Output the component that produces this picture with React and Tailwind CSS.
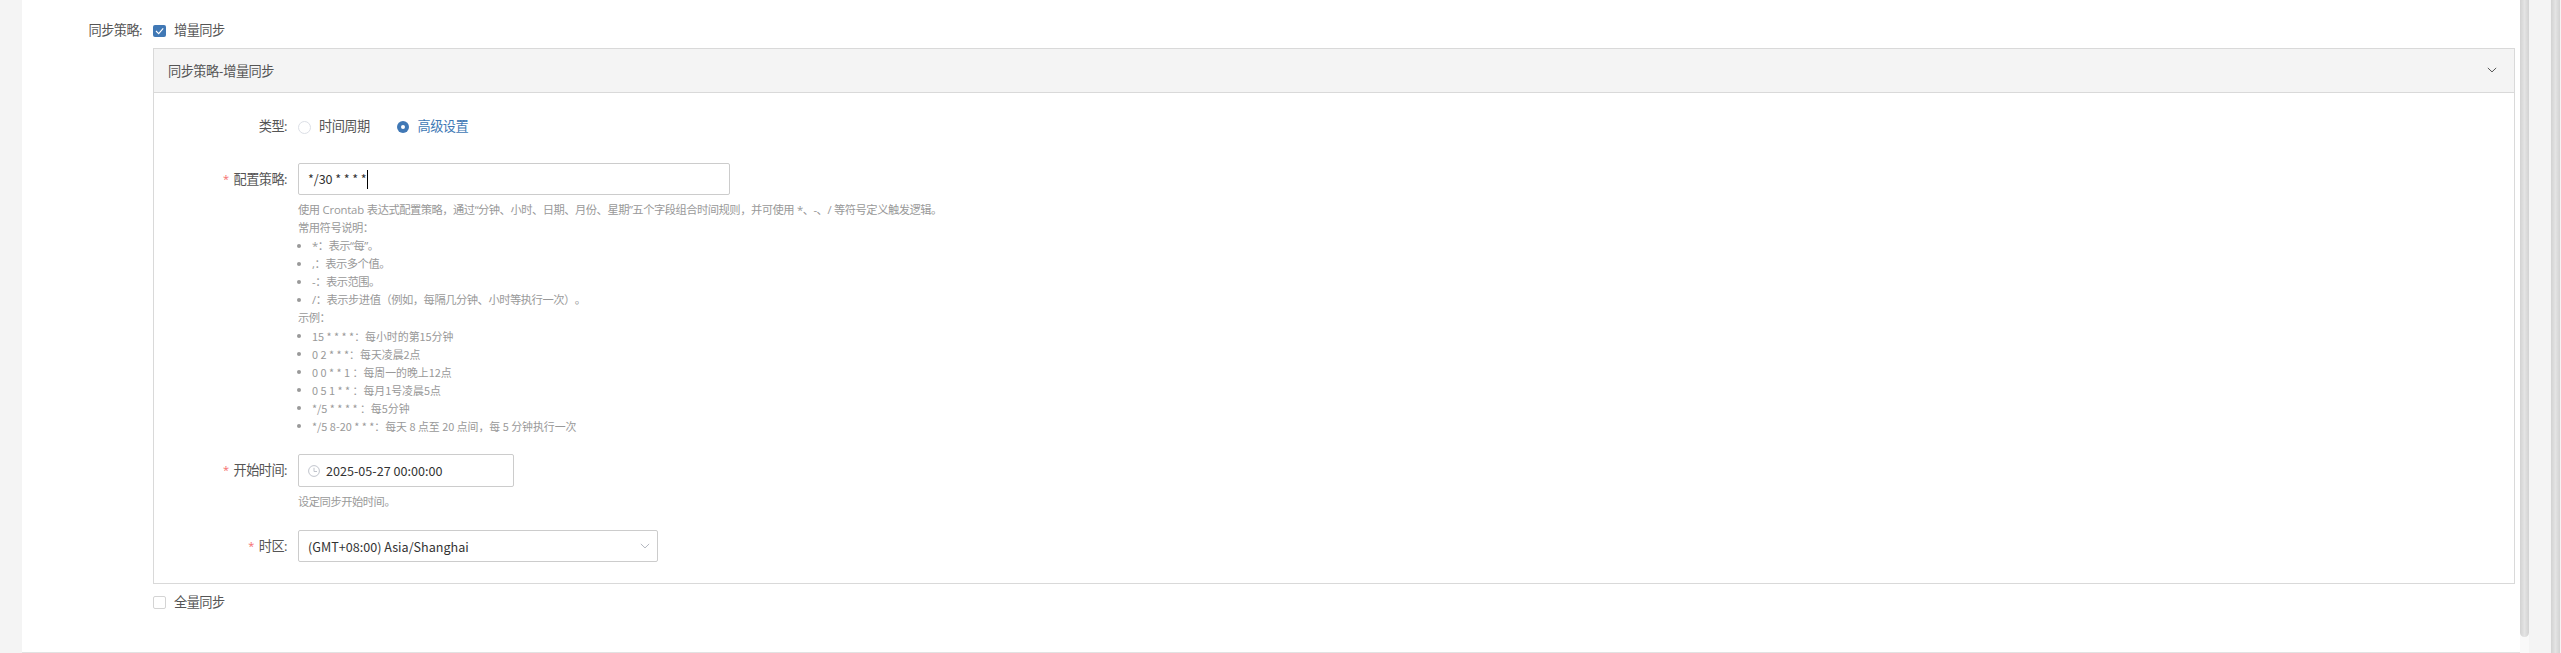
const symbols = [
  { text: '*：表示“每”。' },
  { text: ',：表示多个值。' },
  { text: '-：表示范围。' },
  { text: '/：表示步进值（例如，每隔几分钟、小时等执行一次）', tail: '。' },
];

const examples = [
  { text: '15 * * * *：每小时的第15分钟' },
  { text: '0 2 * * *：每天凌晨2点' },
  { text: '0 0 * * 1 ：每周一的晚上12点' },
  { text: '0 5 1 * * ：每月1号凌晨5点' },
  { text: '*/5 * * * * ：每5分钟' },
  { text: '*/5 8-20 * * *：每天 8 点至 20 点间，每 5 分钟执行一次' },
];

function Chevron({ className }) {
  return (
    <svg className={className} viewBox="0 0 12 7" fill="none" stroke="currentColor" strokeWidth="1.2">
      <path d="M1 1l5 4.8L11 1" />
    </svg>
  );
}

function Label({ required, children }) {
  return (
    <div className="flex w-[133px] shrink-0 justify-end leading-8">
      {required && <span className="mr-[5px] text-[11px] text-[#f56c6c]">*</span>}
      <span>{children}</span>
    </div>
  );
}

function Bullets({ items, className }) {
  return (
    <ul className={className}>
      {items.map(({ text, tail }) => (
        <li key={text} className="flex h-[18px] items-center">
          <span className="-ml-px mr-[11px] size-1 rounded-full bg-[#999]" />
          <span className="whitespace-pre">{text}</span>
          {tail && <span>{tail}</span>}
        </li>
      ))}
    </ul>
  );
}

function Scrollbar({ className }) {
  return (
    <div
      className={
        'w-[9px] shrink-0 bg-linear-to-r from-[#d2d2d2] via-[#e4e4e4] to-[#d2d2d2] ' + className
      }
    />
  );
}

export default function App() {
  return (
    <div className="flex h-[653px] w-[2561px] overflow-hidden bg-[#f4f4f4] pl-[22px] font-['Open_Sans','Noto_Sans_CJK_SC',sans-serif] text-[13.2px] tracking-[-0.55px] text-[#555] [text-spacing-trim:space-all]">
      <main className="flex h-[653px] w-[2498px] shrink-0 flex-col border-b border-[#e2e2e2] bg-white pt-[14px]">
        <div className="flex h-[34px] items-start leading-8">
          <span className="w-[120px] text-right">同步策略:</span>
          <span className="ml-[11px] mt-[11px] flex h-3 w-[13px] items-center justify-center rounded-[2px] bg-[#4078b5] text-white">
            <svg className="h-2 w-[9px]" viewBox="0 0 9 8" fill="none" stroke="currentColor" strokeWidth="1.1">
              <path d="M1 4l2.7 2.7L8.2 1.4" />
            </svg>
          </span>
          <span className="ml-[8px]">增量同步</span>
        </div>

        <section className="ml-[131px] flex h-[536px] w-[2362px] shrink-0 flex-col border border-[#d9d9d9]">
          <header className="flex h-11 shrink-0 items-center justify-between border-b border-[#d9d9d9] bg-[#f4f4f4] pl-[14px] pr-[17px]">
            <span className="pt-0.5">同步策略<span className="mx-[0.5px]">-</span>增量同步</span>
            <Chevron className="mb-0.5 h-[6px] w-[10px] text-[#555]" />
          </header>

          <div className="mt-[17px] flex h-8 shrink-0">
            <Label>类型:</Label>
            <div className="ml-[11px] flex items-center">
              <span className="mt-0.5 size-[13px] rounded-full border border-[#dcdfe6]" />
              <span className="ml-[8px] pt-px">时间周期</span>
              <span className="ml-[27px] mt-0.5 flex size-[12px] items-center justify-center rounded-full bg-[#4078b5]">
                <span className="size-1 rounded-full bg-white" />
              </span>
              <span className="ml-[9px] pt-px text-[#4078b5]">高级设置</span>
            </div>
          </div>

          <div className="mt-[21px] flex shrink-0">
            <Label required>配置策略:</Label>
            <div className="ml-[11px]">
              <div className="flex h-8 w-[432px] items-center rounded-[2px] border border-[#ccc] pl-[9px] font-['Noto_Sans_CJK_SC',sans-serif] text-[12.6px] tracking-normal text-[#333]">
                <span className="tracking-[-0.08px]">*/30 * * * *</span>
                <span className="h-[19px] w-px bg-black" />
              </div>
              <div className="mt-[6px] text-[11.3px] leading-[18px] tracking-[-0.5px] text-[#999]">
                <p className="h-[18px] tracking-[-0.52px] [word-spacing:0.6px]">使用 <span className="tracking-[-0.2px]">Crontab</span> 表达式配置策略，通过“分钟、小时、日期、月份、星期”五个字段组合时间规则，并可使用 *、-、/ 等符号定义触发逻辑。</p>
                <p className="h-[18px]">常用符号说明：</p>
                <Bullets items={symbols} />
                <p className="h-[18px]">示例：</p>
                <Bullets
                  items={examples}
                  className="font-['Noto_Sans_CJK_SC',sans-serif] text-[10.9px] tracking-normal"
                />
              </div>
            </div>
          </div>

          <div className="mt-[19px] flex shrink-0">
            <Label required>开始时间:</Label>
            <div className="ml-[11px]">
              <div className="flex h-[33px] w-[216px] items-center rounded-[2px] border border-[#ccc] pl-[9px] font-['Noto_Sans_CJK_SC',sans-serif] text-[12.6px] tracking-normal text-[#333]">
                <svg className="mr-[6px] size-3 text-[#c0c4cc]" viewBox="0 0 12 12" fill="none" stroke="currentColor">
                  <circle cx="6" cy="6" r="5.4" />
                  <path d="M6 2.8v3.7h3" />
                </svg>
                <span className="pt-0.5">2025-05-27 00:00:00</span>
              </div>
              <p className="mt-[6px] text-[11.3px] leading-[18px] tracking-[-0.5px] text-[#999]">设定同步开始时间。</p>
            </div>
          </div>

          <div className="mt-[19px] flex shrink-0">
            <Label required>时区:</Label>
            <div className="ml-[11px] flex h-8 w-[360px] items-center justify-between rounded-[2px] border border-[#ccc] pl-[9px] pr-[7px] font-['Noto_Sans_CJK_SC',sans-serif] text-[12.6px] tracking-normal text-[#333]">
              <span className="pt-0.5">(GMT+08:00) Asia/Shanghai</span>
              <Chevron className="h-[6px] w-[10px] text-[#b4b8c0]" />
            </div>
          </div>
        </section>

        <div className="ml-[131px] flex h-9 items-center">
          <span className="size-[13px] rounded-[2px] border border-[#d4d4d4]" />
          <span className="ml-[8px] pt-px">全量同步</span>
        </div>
      </main>

      <div className="w-[9px] shrink-0 bg-[#f9f9f9]">
        <Scrollbar className="h-[637px] rounded-b-full" />
      </div>
      <div className="w-[22px] shrink-0" />
      <Scrollbar className="h-full" />
    </div>
  );
}
